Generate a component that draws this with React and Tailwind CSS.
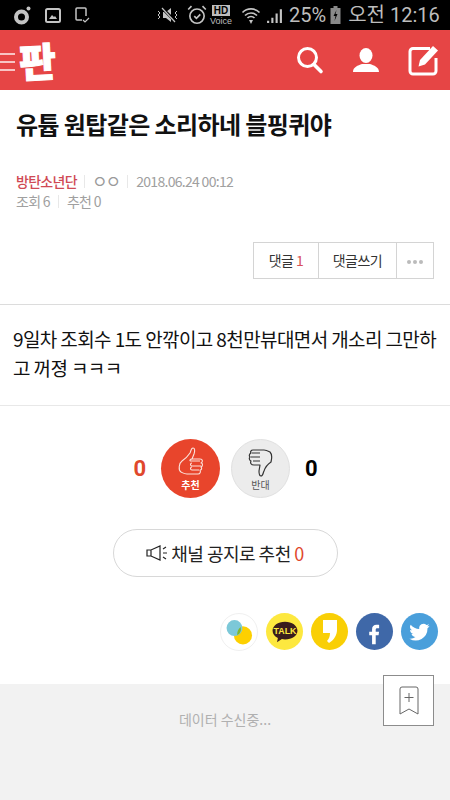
import React from 'react';

const KR = { fontFamily: '"Noto Sans CJK KR", "Noto Sans", sans-serif' };

// ------------------------
// Status bar
// ------------------------
function StatusBar() {
  return (
    <div className="h-[30px] bg-black flex items-center text-[#bdbdbd] overflow-hidden">
      <svg width="90" height="30" viewBox="0 0 90 30" className="shrink-0 ml-[12px]">
        <circle cx="9.500" cy="17" r="5.500" fill="none" stroke="#c4c4c4" strokeWidth="4" />
        <circle cx="16.500" cy="8.500" r="2" fill="#c4c4c4" />
        <rect x="34" y="9" width="14" height="13" rx="1.500" fill="none" stroke="#c4c4c4" strokeWidth="2" />
        <path d="M37 19l3-4 2 2 1-1 2 3z" fill="#c4c4c4" />
        <path d="M70 20h-5a1 1 0 0 1-1-1V9a1 1 0 0 1 1-1h8a1 1 0 0 1 1 1v7" fill="none" stroke="#c4c4c4" strokeWidth="1.500" />
        <path d="M71 20l2 2 4-4" fill="none" stroke="#c4c4c4" strokeWidth="1.200" />
      </svg>
      <svg width="24" height="18" viewBox="0 0 24 18" className="shrink-0 ml-[54px]">
        <path d="M7 6h3l5-4v14l-5-4H7z" fill="#c4c4c4" />
        <path d="M6 2l14 14" stroke="#000" strokeWidth="3" />
        <path d="M6 2l13 14" stroke="#c4c4c4" strokeWidth="1.200" />
        <path d="M2 5l2 2-2 2 2 2-2 2M21 5l-2 2 2 2-2 2 2 2" fill="none" stroke="#c4c4c4" strokeWidth="1" />
      </svg>
      <svg width="22" height="22" viewBox="0 0 20 20" className="shrink-0 ml-[6px]">
        <circle cx="10" cy="11" r="6.500" fill="none" stroke="#c4c4c4" strokeWidth="1.500" />
        <path d="M7.500 11l2 2 3.500-3.500M2 5l3-3M18 5l-3-3" fill="none" stroke="#c4c4c4" strokeWidth="1.500" />
      </svg>
      <div className="ml-[1px] w-[24px] shrink-0 flex flex-col items-center leading-none" style={{ fontFamily: '"Liberation Sans", sans-serif' }}>
        <span className="bg-[#bdbdbd] text-black text-[10px] font-bold px-[2px] leading-[11px]">HD</span>
        <span className="text-[9px] leading-[10px]">Voice</span>
      </div>
      <svg width="20" height="20" viewBox="0 0 20 20" className="shrink-0 ml-[8px]">
        <path d="M1.500 7.500a12 12 0 0 1 17 0M4 10.500a8.500 8.500 0 0 1 12 0M6.500 13a5 5 0 0 1 7 0" fill="none" stroke="#c4c4c4" strokeWidth="1.700" />
        <path d="M8 15h4l-2 4z" fill="#c4c4c4" />
      </svg>
      <svg width="17" height="17" viewBox="0 0 16 16" className="shrink-0 ml-[5px]">
        <path d="M1 13h2v2H1zM5 10h2v5H5zM9 6h2v9H9zM13 2h2v13h-2z" fill="#c4c4c4" />
      </svg>
      <span className="ml-[6px] text-[20px] leading-none shrink-0" style={{ fontFamily: 'Roboto, sans-serif' }}>25%</span>
      <svg width="13" height="20" viewBox="0 0 12 20" className="shrink-0 ml-[3px]">
        <path d="M4 1h4v2h3v16H1V3h3z" fill="#8a8a8a" />
        <path d="M7 5l-3 6h2l-1 5 3-7H6z" fill="#000" />
      </svg>
      <span className="ml-[6px] text-[20px] leading-none shrink-0 whitespace-nowrap" style={{ fontFamily: 'Roboto, "Noto Sans CJK KR", sans-serif' }}>오전 12:16</span>
    </div>
  );
}

// ------------------------
// Red header
// ------------------------
function Header() {
  return (
    <div className="h-[60px] bg-[#e64545] flex items-center">
      <div className="flex flex-col gap-[6px] w-[15px] mt-[3px] shrink-0">
        <div className="h-[2px] bg-[#f8c4c4]" />
        <div className="h-[2px] bg-[#f8c4c4]" />
        <div className="h-[2px] bg-[#f8c4c4]" />
      </div>
      <span className="text-white text-[40px] leading-none font-black -rotate-3 ml-[4px] -mt-[1px] [-webkit-text-stroke:1px_white]" style={KR}>판</span>
      <div className="ml-auto flex items-center">
        <svg width="28" height="30" viewBox="0 0 28 30" className="mr-[29px]">
          <circle cx="11.500" cy="12.500" r="9" fill="none" stroke="#fff" strokeWidth="3" />
          <path d="M18 19.500l7 7" stroke="#fff" strokeWidth="3.600" strokeLinecap="round" />
        </svg>
        <svg width="26" height="26" viewBox="0 0 26 26" className="mr-[29px]">
          <ellipse cx="13" cy="8.500" rx="6.500" ry="7.500" fill="#fff" />
          <path d="M0 25c0-5 5-6.500 9-8h8c4 1.500 9 3 9 8z" fill="#fff" />
        </svg>
        <svg width="32" height="32" viewBox="0 0 32 32" className="mr-[10px]">
          <path d="M22 4.500H5a3 3 0 0 0-3 3V27a3 3 0 0 0 3 3h20a3 3 0 0 0 3-3V14" fill="none" stroke="#fff" strokeWidth="3" />
          <path d="M12 16L25 2l5 4.500-13 14-6.500 2z" fill="#fff" />
        </svg>
      </div>
    </div>
  );
}

function ThumbUp() {
  return (
    <svg width="28" height="32" viewBox="0 0 28 32" fill="none" stroke="#fbe3dc" strokeWidth="1.100" strokeLinejoin="round">
      <path d="M5 15c3-2 6-5 8-8 1-2 1-5 3-5s2 3 1 6l-2 5h8c3 0 3 3 1 4 2 0 2 3 0 4 1 1 1 3-1 3 1 2 0 4-2 4H10c-3 0-4-1-6-2-3-2-2-9 1-11z" />
      <path d="M15 13c-2 0-3 2-1 2h9M15 17c-2 0-2 3 0 3h9M15 21c-2 0-2 3 0 3h7" />
    </svg>
  );
}

function ThumbDown() {
  return (
    <svg width="28" height="32" viewBox="0 0 28 32" fill="none" stroke="#333" strokeWidth="1.200" strokeLinejoin="round">
      <path d="M24 16c1-4 1-8-1-10-2-1-4-2-6-2H6C4 4 3 6 4 7 2 8 2 10 3 11c-1 1-1 3 1 4-1 2 0 4 3 4h6l-1 6c0 3 0 5 2 5s2-3 3-5c1-3 4-7 7-9z" />
      <path d="M13 7H5M13 11H4M13 15H6" />
    </svg>
  );
}

function ShareIcons() {
  return (
    <div className="flex justify-end gap-[8px] pr-[12px] mt-[36px]">
      <div className="w-[38px] h-[38px] rounded-full bg-white border border-[#f0f0f0] flex items-center justify-center">
        <svg width="34" height="34" viewBox="0 0 30 30">
          <circle cx="18.500" cy="18" r="8" fill="#fdd000" />
          <circle cx="11" cy="11.500" r="7" fill="#7cc8d8" />
          <path d="M16.500 10.500a7 7 0 0 1-3 7.300 8 8 0 0 1 3-7.300z" fill="#82b82a" />
        </svg>
      </div>
      <div className="w-[37px] h-[37px] rounded-full bg-[#fde83f] flex items-center justify-center">
        <svg width="28" height="24" viewBox="0 0 31 27">
          <path d="M15.500 2C7.500 2 1.500 6.500 1.500 12c0 3.700 2.500 6.500 6 8.200L6.500 25l5.500-3.500c1 .2 2.400.4 3.500.4 8 0 14-4.400 14-9.900S23.500 2 15.500 2z" fill="#3a1d1d" />
          <text x="15.500" y="16" textAnchor="middle" fontSize="10" fontWeight="700" fill="#fde83f" fontFamily="Liberation Sans, sans-serif">TALK</text>
        </svg>
      </div>
      <div className="w-[37px] h-[37px] rounded-full bg-[#f9cf05] flex items-center justify-center">
        <svg width="14" height="23" viewBox="0 0 14 23">
          <path d="M0 0h14v10c0 5-3 10-8 13l-2-2c2-2 3-5 3-8H0z" fill="#fff" />
        </svg>
      </div>
      <div className="w-[37px] h-[37px] rounded-full bg-[#3f68a8] flex items-center justify-center overflow-hidden">
        <svg width="13" height="23" viewBox="0 0 16 26" className="mt-[5px]">
          <path d="M5 25V14H1.500V9.500H5V6.500C5 3 7 1 10.500 1c1.500 0 2.800.1 3.200.2v4h-2.200C9.800 5.200 9.500 6 9.500 7.200v2.300h4.100l-.6 4.500H9.500v11z" fill="#fff" />
        </svg>
      </div>
      <div className="w-[37px] h-[37px] rounded-full bg-[#4a9fdb] flex items-center justify-center">
        <svg width="21" height="18" viewBox="0 0 25 21">
          <path d="M24.500 3c-.9.400-1.800.7-2.800.8 1-.6 1.800-1.600 2.200-2.700-1 .6-2 1-3.100 1.200A5 5 0 0 0 12.300 7C8.200 6.800 4.500 4.800 2 1.800a5 5 0 0 0 1.500 6.600c-.8 0-1.600-.2-2.300-.6 0 2.400 1.700 4.500 4 5-.7.200-1.500.2-2.200.1.600 2 2.500 3.400 4.700 3.500A10 10 0 0 1 .5 18.400 14 14 0 0 0 22 6c1-.7 1.800-1.600 2.500-3z" fill="#fff" />
        </svg>
      </div>
    </div>
  );
}

// ------------------------
// Main page
// ------------------------
export default function App() {
  return (
    <div className="w-[450px] h-[800px] relative overflow-hidden bg-white text-black" style={KR}>
      <StatusBar />
      <Header />

      <h1 className="mt-[17px] px-[16px] text-[24px] leading-[34px] font-bold tracking-[-0.6px] text-[#111]">
        유튭 원탑같은 소리하네 블핑퀴야
      </h1>

      {/* meta */}
      <div className="mt-[30px] px-[16px] text-[14px] leading-[20px] tracking-[-0.7px] text-[#a0a0a0]">
        <div className="flex items-center">
          <span className="text-[#d04a54] font-medium">방탄소년단</span>
          <span className="w-px h-[13px] bg-[#e8e8e8] mx-[7px]" />
          <span className="text-[#9a9a9a] text-[17px] leading-[20px] tracking-[-2px]">ㅇㅇ</span>
          <span className="w-px h-[13px] bg-[#e8e8e8] mx-[8px]" />
          <span>2018.06.24 00:12</span>
        </div>
        <div className="flex items-center">
          <span>조회 6</span>
          <span className="w-px h-[13px] bg-[#e8e8e8] mx-[8px]" />
          <span>추천 0</span>
        </div>
      </div>

      {/* comment buttons */}
      <div className="mt-[31px] flex justify-end pr-[16px]">
        <div className="flex h-[37px] border border-[#d4d4d4] text-[14px] tracking-[-0.5px] text-[#333]">
          <div className="w-[65px] flex items-center justify-center border-r border-[#d4d4d4]">
            댓글&nbsp;<span className="text-[#d9505a]">1</span>
          </div>
          <div className="w-[78px] flex items-center justify-center border-r border-[#d4d4d4]">댓글쓰기</div>
          <div className="w-[36px] flex items-center justify-center gap-[2px] mt-[2px]">
            <span className="w-[4px] h-[4px] rounded-full bg-[#bbb]" />
            <span className="w-[4px] h-[4px] rounded-full bg-[#bbb]" />
            <span className="w-[4px] h-[4px] rounded-full bg-[#bbb]" />
          </div>
        </div>
      </div>

      {/* body */}
      <div className="mt-[25px] border-t border-b border-[#dcdcdc] border-b-[#e8e8e8] h-[102px] px-[13px] pt-[19px] text-[19px] leading-[29px] tracking-[-0.6px] text-[#111]">
        9일차 조회수 1도 안깎이고 8천만뷰대면서 개소리 그만하고 꺼졍 ㅋㅋㅋ
      </div>

      {/* votes */}
      <div className="mt-[33px] flex items-center justify-center pl-[1px]">
        <span className="text-[22px] font-bold text-[#e0482c] mr-[15px]" style={{ fontFamily: 'Roboto, sans-serif' }}>0</span>
        <div className="w-[59px] h-[59px] rounded-full bg-[#e8452c] flex flex-col items-center justify-center">
          <ThumbUp />
          <span className="text-[10px] leading-[13px] font-bold text-white">추천</span>
        </div>
        <div className="ml-[11px] w-[59px] h-[59px] rounded-full bg-[#ececec] border border-[#e0e0e0] flex flex-col items-center justify-center">
          <ThumbDown />
          <span className="text-[10px] leading-[13px] text-[#555]">반대</span>
        </div>
        <span className="text-[22px] font-bold text-black ml-[15px]" style={{ fontFamily: 'Roboto, sans-serif' }}>0</span>
      </div>

      {/* notice recommend */}
      <div className="mt-[31px] mx-auto w-[225px] h-[48px] rounded-full border border-[#d8d8d8] flex items-center justify-center text-[18px] tracking-[-0.5px] text-[#222]">
        <svg width="26" height="20" viewBox="0 0 26 20" fill="none" stroke="#222" strokeWidth="1.200" className="-ml-[1px]">
          <path d="M2 7v6h4l9 4V3L6 7zM6 7v6" />
          <path d="M18 6l3-2M18 10h4M18 14l3 2" />
        </svg>
        <span>채널 공지로 추천&nbsp;<span className="text-[#e0482c]">0</span></span>
      </div>

      <ShareIcons />

      {/* loading area */}
      <div className="mt-[33px] h-[120px] bg-[#f2f2f2] pt-[25px] text-center text-[14px] leading-[20px] text-[#b0b0b0]">
        데이터 수신중...
      </div>

      {/* floating bookmark */}
      <div className="absolute left-[383px] top-[675px] w-[51px] h-[51px] bg-white/95 border border-[#8c8c8c] flex items-center justify-center">
        <svg width="22" height="30" viewBox="0 0 22 30" fill="none" stroke="#666" strokeWidth="1">
          <path d="M2 28V3a2 2 0 0 1 2-2h14a2 2 0 0 1 2 2v25l-9-5z" />
          <path d="M11 7v9M6.500 11.500h9" />
        </svg>
      </div>
    </div>
  );
}
